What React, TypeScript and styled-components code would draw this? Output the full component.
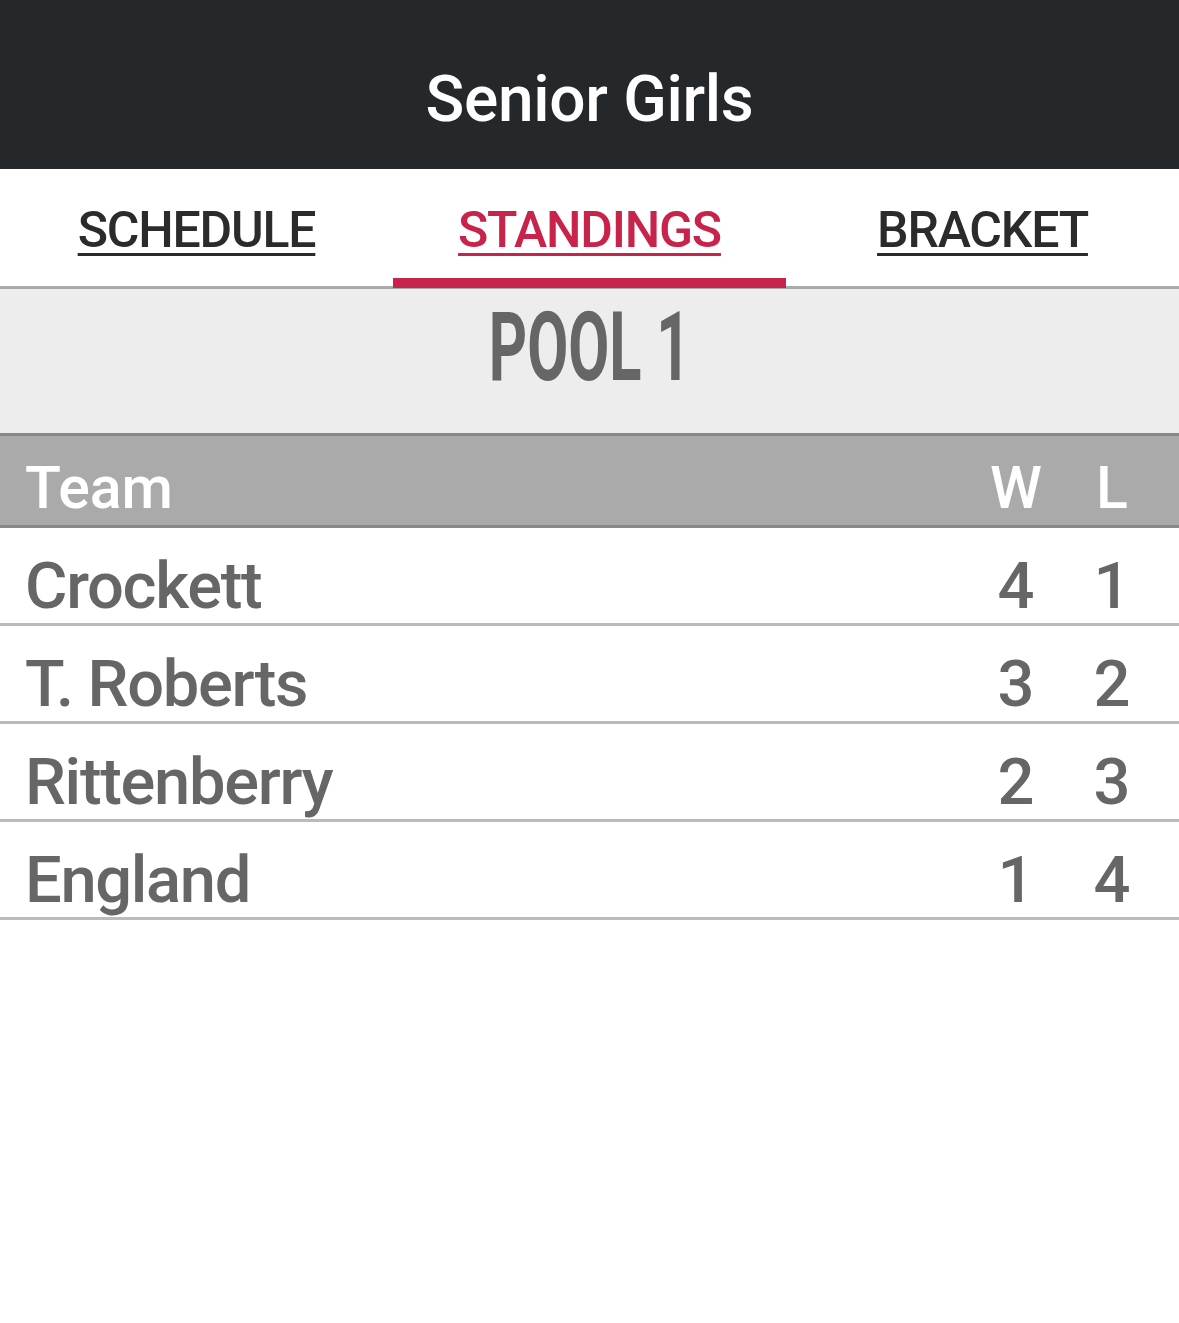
import styled, { createGlobalStyle } from 'styled-components'

const GlobalStyle = createGlobalStyle`
  html, body {
    margin: 0;
    padding: 0;
    background: #ffffff;
    font-family: Roboto, "Liberation Sans", sans-serif;
  }
`

const Page = styled.div`
  width: 1179px;
  min-height: 1323px;
  background: #fff;
`

const TopBar = styled.header`
  height: 169px;
  background: #25282b;
  display: flex;
  align-items: center;
  justify-content: center;
`

const Title = styled.h1`
  margin: 0;
  padding-top: 30px;
  color: #fff;
  font-size: 64px;
  font-weight: 500;
  letter-spacing: -0.3px;
`

const Tabs = styled.nav`
  display: grid;
  grid-template-columns: repeat(3, 1fr);
  height: 117px;
  border-bottom: 3px solid #aaaaaa;
`

const Tab = styled.div<{ $active?: boolean }>`
  display: flex;
  align-items: center;
  justify-content: center;
  padding-top: 12px;
  border-bottom: 10px solid ${p => (p.$active ? '#c8234b' : 'transparent')};
  margin-bottom: -2px;
  color: ${p => (p.$active ? '#c8234b' : '#2b2b2b')};
  font-size: 50px;
  font-weight: 500;
  letter-spacing: -1.2px;
  text-decoration: underline;
  text-decoration-thickness: 3px;
  text-underline-offset: 6px;
`

const PoolHeader = styled.div`
  height: 144px;
  background: #ededed;
  display: flex;
  justify-content: center;
  border-bottom: 3px solid #888888;
`

const PoolTitle = styled.div`
  display: inline-block;
  margin-top: 10px;
  color: #666;
  font-size: 96px;
  font-weight: 700;
  line-height: 1;
  transform: scaleX(0.62);
`

const Row = styled.div<{ $head?: boolean }>`
  display: grid;
  grid-template-columns: 1fr 96px 96px;
  padding: 0 19px 0 25px;
  height: ${p => (p.$head ? 89 : 95)}px;
  align-items: center;
  background: ${p => (p.$head ? '#aaaaaa' : '#ffffff')};
  color: ${p => (p.$head ? '#ffffff' : '#666666')};
  border-bottom: 3px solid ${p => (p.$head ? '#888888' : '#bbbbbb')};
  font-size: ${p => (p.$head ? 59 : 65)}px;
  font-weight: 500;
  line-height: 1;
`

const TeamName = styled.span<{ $head?: boolean }>`
  padding-top: ${p => (p.$head ? 14 : 22)}px;
  letter-spacing: ${p => (p.$head ? 0 : -1.3)}px;
`

const Score = styled.span<{ $head?: boolean }>`
  text-align: center;
  padding-top: ${p => (p.$head ? 14 : 22)}px;
`

const standings = [
  { team: 'Crockett', w: 4, l: 1 },
  { team: 'T. Roberts', w: 3, l: 2 },
  { team: 'Rittenberry', w: 2, l: 3 },
  { team: 'England', w: 1, l: 4 },
]

export default function App() {
  return (
    <Page>
      <GlobalStyle />
      <TopBar>
        <Title>Senior Girls</Title>
      </TopBar>
      <Tabs>
        <Tab>SCHEDULE</Tab>
        <Tab $active>STANDINGS</Tab>
        <Tab>BRACKET</Tab>
      </Tabs>
      <PoolHeader>
        <PoolTitle>POOL 1</PoolTitle>
      </PoolHeader>
      <Row $head>
        <TeamName $head>Team</TeamName>
        <Score $head>W</Score>
        <Score $head>L</Score>
      </Row>
      {standings.map(s => (
        <Row key={s.team}>
          <TeamName>{s.team}</TeamName>
          <Score>{s.w}</Score>
          <Score>{s.l}</Score>
        </Row>
      ))}
    </Page>
  )
}
